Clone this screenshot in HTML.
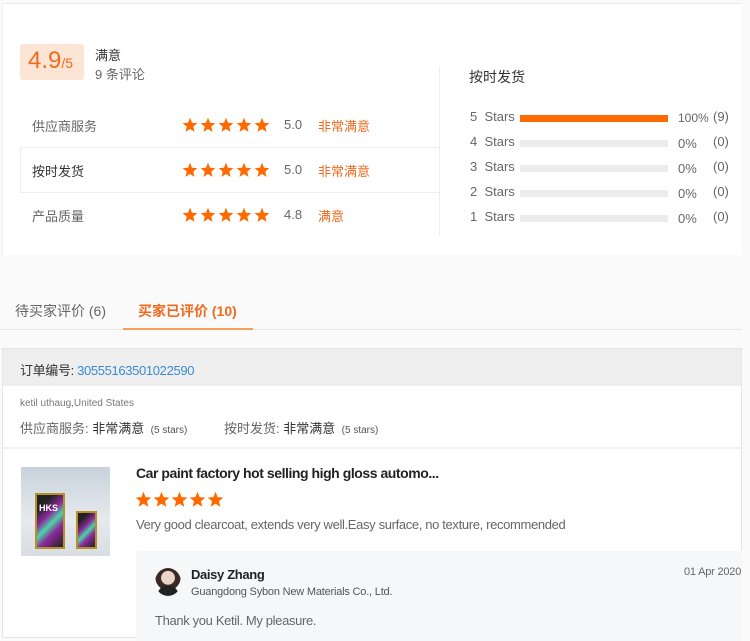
<!DOCTYPE html>
<html><head><meta charset="utf-8">
<style>
*{margin:0;padding:0;box-sizing:border-box}
body{width:750px;height:634px;overflow:hidden;background:#fafafa;font-family:"Liberation Sans","Noto Sans CJK SC",sans-serif;color:#333;position:relative}
.a{position:absolute;white-space:nowrap}
.card{position:absolute;left:2px;top:3px;width:740px;height:252px;background:#fff;border-top:1px solid #e8e8ee;border-left:1px solid #eee}
.o{color:#f06a1d}
.g{color:#666}
.n{letter-spacing:-0.35px}
.star{display:inline-block;width:16px;height:16px;margin-right:2px;vertical-align:middle}
.bar{position:absolute;left:520px;width:148px;height:7px;background:#ececec}
</style></head><body>
<svg width="0" height="0" style="position:absolute"><defs><symbol id="s" viewBox="0 0 24 24"><polygon fill="#ff6a00" points="12,1 15,8.6 23,9.2 16.9,14.4 18.8,22.3 12,18 5.2,22.3 7.1,14.4 1,9.2 9,8.6"/></symbol></defs></svg>
<div class="card"></div>
<div class="a" style="left:20px;top:44px;width:64px;height:36px;background:#fde5d6;border-radius:3px"></div>
<div class="a o" style="left:28px;top:47px;font-size:24px">4.9<span style="font-size:14px">/5</span></div>
<div class="a" style="left:95px;top:45px;font-size:13px">满意</div>
<div class="a g" style="left:95px;top:64px;font-size:13px">9 条评论</div>
<div class="a" style="left:439px;top:66px;width:1px;height:170px;background:#eee"></div>
<div class="a" style="left:20px;top:147px;width:419px;height:46px;border-top:1px solid #eee;border-bottom:1px solid #eee;border-left:1px solid #eee"></div>

<div class="a g" style="left:32px;top:116px;font-size:13px">供应商服务</div>
<div class="a" style="left:182px;top:116px"><svg class="star"><use href="#s"/></svg><svg class="star"><use href="#s"/></svg><svg class="star"><use href="#s"/></svg><svg class="star"><use href="#s"/></svg><svg class="star"><use href="#s"/></svg></div>
<div class="a g" style="left:284px;top:117px;font-size:13px">5.0</div>
<div class="a o" style="left:318px;top:116px;font-size:13px">非常满意</div>

<div class="a" style="left:32px;top:161px;font-size:13px">按时发货</div>
<div class="a" style="left:182px;top:161px"><svg class="star"><use href="#s"/></svg><svg class="star"><use href="#s"/></svg><svg class="star"><use href="#s"/></svg><svg class="star"><use href="#s"/></svg><svg class="star"><use href="#s"/></svg></div>
<div class="a g" style="left:284px;top:162px;font-size:13px">5.0</div>
<div class="a o" style="left:318px;top:161px;font-size:13px">非常满意</div>

<div class="a g" style="left:32px;top:206px;font-size:13px">产品质量</div>
<div class="a" style="left:182px;top:206px"><svg class="star"><use href="#s"/></svg><svg class="star"><use href="#s"/></svg><svg class="star"><use href="#s"/></svg><svg class="star"><use href="#s"/></svg><svg class="star"><use href="#s"/></svg></div>
<div class="a g" style="left:284px;top:207px;font-size:13px">4.8</div>
<div class="a o" style="left:318px;top:206px;font-size:13px">满意</div>

<div class="a" style="left:469px;top:67px;font-size:14px">按时发货</div>
<div class="a g" style="left:470px;top:109px;font-size:13px">5&nbsp; Stars</div><div class="bar" style="top:115px;background:#ff6a00"></div><div class="a g" style="left:678px;top:111px;font-size:12px">100%</div><div class="a g" style="left:713px;top:109px;font-size:13px">(9)</div>
<div class="a g" style="left:470px;top:134px;font-size:13px">4&nbsp; Stars</div><div class="bar" style="top:140px"></div><div class="a g" style="left:678px;top:136px;font-size:13px">0%</div><div class="a g" style="left:713px;top:134px;font-size:13px">(0)</div>
<div class="a g" style="left:470px;top:159px;font-size:13px">3&nbsp; Stars</div><div class="bar" style="top:165px"></div><div class="a g" style="left:678px;top:161px;font-size:13px">0%</div><div class="a g" style="left:713px;top:159px;font-size:13px">(0)</div>
<div class="a g" style="left:470px;top:184px;font-size:13px">2&nbsp; Stars</div><div class="bar" style="top:190px"></div><div class="a g" style="left:678px;top:186px;font-size:13px">0%</div><div class="a g" style="left:713px;top:184px;font-size:13px">(0)</div>
<div class="a g" style="left:470px;top:209px;font-size:13px">1&nbsp; Stars</div><div class="bar" style="top:215px"></div><div class="a g" style="left:678px;top:211px;font-size:13px">0%</div><div class="a g" style="left:713px;top:209px;font-size:13px">(0)</div>

<div class="a g" style="left:15px;top:301px;font-size:14px">待买家评价 (6)</div>
<div class="a o" style="left:138px;top:301px;font-size:14px;font-weight:bold">买家已评价 (10)</div>
<div class="a" style="left:0;top:329px;width:742px;height:1px;background:#e6e6e6"></div>
<div class="a" style="left:123px;top:328px;width:130px;height:2px;background:#f6a060"></div>

<div class="a" style="left:2px;top:348px;width:740px;height:290px;background:#fff;border:1px solid #e4e4e4"></div>
<div class="a" style="left:3px;top:349px;width:738px;height:37px;background:#eeeeee"></div>
<div class="a n" style="left:20px;top:360px;font-size:13px">订单编号: <span style="color:#3a8bd0">30555163501022590</span></div>
<div class="a g" style="left:20px;top:398px;font-size:10px;color:#777">ketil uthaug,United States</div>
<div class="a g" style="left:20px;top:418px;font-size:13px">供应商服务: <span style="color:#333">非常满意</span> <span style="font-size:10px;color:#555">&nbsp;(5 stars)</span></div>
<div class="a g" style="left:224px;top:418px;font-size:13px">按时发货: <span style="color:#333">非常满意</span> <span style="font-size:10px;color:#555">&nbsp;(5 stars)</span></div>
<div class="a" style="left:3px;top:447px;width:738px;height:2px;background:#f2f2f2"></div>

<div class="a" style="left:21px;top:467px;width:89px;height:89px;background:linear-gradient(#c8d2dc,#e6eaee 60%,#d8dde2)">
 <div style="position:absolute;left:14px;top:26px;width:30px;height:56px;background:linear-gradient(135deg,#222 20%,#8a2a9a 40%,#4cd4a8 55%,#8a2a9a 70%,#222);border:2px solid #b8902a"></div>
 <div style="position:absolute;left:18px;top:36px;font-size:9px;color:#fff;font-weight:bold">HKS</div>
 <div style="position:absolute;left:55px;top:44px;width:21px;height:38px;background:linear-gradient(135deg,#222 20%,#8a2a9a 40%,#4cd4a8 55%,#8a2a9a 70%,#222);border:2px solid #b8902a"></div>
</div>
<div class="a" style="left:136px;top:465px;font-size:14px;font-weight:bold;color:#222;letter-spacing:-0.45px">Car paint factory hot selling high gloss automo...</div>
<div class="a" style="left:135px;top:491px"><svg class="star" style="width:17px;height:17px;margin-right:1px"><use href="#s"/></svg><svg class="star" style="width:17px;height:17px;margin-right:1px"><use href="#s"/></svg><svg class="star" style="width:17px;height:17px;margin-right:1px"><use href="#s"/></svg><svg class="star" style="width:17px;height:17px;margin-right:1px"><use href="#s"/></svg><svg class="star" style="width:17px;height:17px;margin-right:1px"><use href="#s"/></svg></div>
<div class="a g n" style="left:136px;top:517px;font-size:13px">Very good clearcoat, extends very well.Easy surface, no texture, recommended</div>

<div class="a" style="left:136px;top:551px;width:606px;height:90px;background:#f6f7f9;border-radius:4px 0 0 0"></div>
<div class="a" style="left:155px;top:568px;width:26px;height:28px;border-radius:50%;background:radial-gradient(circle at 50% 35%,#e8d4c8 30%,#3a2a25 32%,#3a2a25 55%,#fff 57%);overflow:hidden"><div style="position:absolute;left:3px;top:18px;width:20px;height:10px;background:#222;border-radius:8px 8px 0 0"></div></div>
<div class="a n" style="left:191px;top:567px;font-size:13px;font-weight:bold;color:#222">Daisy Zhang</div>
<div class="a g n" style="left:191px;top:586px;font-size:11px;color:#555;letter-spacing:-0.2px">Guangdong Sybon New Materials Co., Ltd.</div>
<div class="a g n" style="left:684px;top:566px;font-size:11px;letter-spacing:-0.2px">01 Apr 2020</div>
<div class="a g n" style="left:155px;top:613px;font-size:13px">Thank you Ketil. My pleasure.</div>
</body></html>
